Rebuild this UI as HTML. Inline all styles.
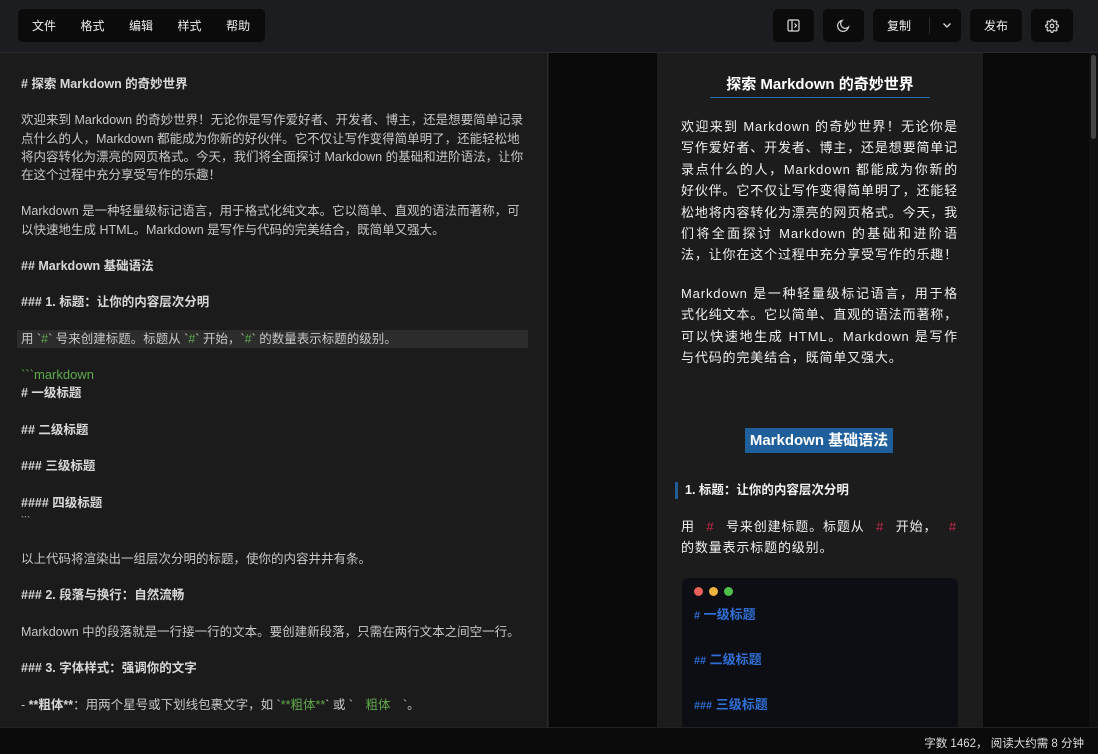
<!DOCTYPE html>
<html><head><meta charset="utf-8"><style>
*{box-sizing:border-box;margin:0;padding:0}
body{width:1098px;height:754px;overflow:hidden;background:#1b1b1c;font-family:"Liberation Sans","Noto Sans CJK SC",sans-serif;color:#ddd;position:relative}
.hdr{position:absolute;left:0;top:0;width:1098px;height:53px;background:#1c1d20;border-bottom:1px solid #2a2a2a}
.menu{position:absolute;left:18px;top:9px;width:247px;height:33px;background:#0b0b0c;border-radius:5px;display:flex;align-items:center;font-size:12px;color:#eee;padding-left:14px;gap:24.5px}
.btn{position:absolute;top:9px;height:33px;background:#0b0b0c;border-radius:5px;display:flex;align-items:center;justify-content:center;font-size:12px;color:#eee}
.ed{position:absolute;left:0;top:53px;width:548px;height:674px;background:#1b1b1b;border-right:1px solid #2b2b2b;padding:22px 21px;font-size:12.5px;line-height:18.2px;color:#c8c8c8}
.ed b{color:#d8d8d8}
.ed .g{color:#5fa84c}
.hl{background:#2c2c2c;margin:0 -4px;padding:0 4px;width:511px}
.pv{position:absolute;left:549px;top:53px;width:540px;height:674px;background:#090909}
.panel{position:absolute;left:657px;top:53px;width:326px;height:674px;background:#1c1c1d;overflow:hidden}
.sb{position:absolute;left:1089px;top:53px;width:9px;height:674px;background:#111}
.sb div{position:absolute;left:2px;top:2px;width:5px;height:84px;background:#444;border-radius:3px}
.p{position:absolute;left:24px;width:277px;font-size:13px;line-height:21.4px;letter-spacing:0.85px;color:#f0f0f0;text-align:justify}
.r{color:#c8284a}
.ft{position:absolute;left:0;top:727px;width:1098px;height:27px;background:#0b0b0b;border-top:1px solid #222;font-size:11.5px;color:#ddd;text-align:right;padding:7px 14px 0 0}
</style></head><body>
<div class="hdr">
<div class="menu"><span>文件</span><span>格式</span><span>编辑</span><span>样式</span><span>帮助</span></div>
<div class="btn" style="left:773px;width:41px"><svg width="13" height="13" viewBox="0 0 13 13" fill="none" stroke="#ddd" stroke-width="1.2"><rect x="1" y="1" width="11" height="11" rx="1.5"/><line x1="5" y1="1" x2="5" y2="12"/><path d="M7.5 4.5l2 2-2 2"/></svg></div>
<div class="btn" style="left:823px;width:41px"><svg width="13" height="13" viewBox="0 0 13 13" fill="none" stroke="#ddd" stroke-width="1.2"><path d="M11.5 8A5.5 5.5 0 1 1 5 1.5 4.2 4.2 0 0 0 11.5 8z"/></svg></div>
<div class="btn" style="left:873px;width:88px;justify-content:flex-start"><span style="margin-left:14px">复制</span><span style="position:absolute;left:56px;top:8px;width:1px;height:17px;background:#2a2a2a"></span><svg style="position:absolute;left:69px;top:13px" width="10" height="7" viewBox="0 0 10 7" fill="none" stroke="#ddd" stroke-width="1.3"><path d="M1.5 1.5l3.5 3.5 3.5-3.5"/></svg></div>
<div class="btn" style="left:970px;width:52px">发布</div>
<div class="btn" style="left:1031px;width:42px"><svg width="14" height="14" viewBox="0 0 24 24" fill="none" stroke="#ddd" stroke-width="2"><circle cx="12" cy="12" r="3"/><path d="M19.4 15a1.7 1.7 0 0 0 .3 1.8l.1.1a2 2 0 1 1-2.8 2.8l-.1-.1a1.7 1.7 0 0 0-1.8-.3 1.7 1.7 0 0 0-1 1.5V21a2 2 0 1 1-4 0v-.1a1.7 1.7 0 0 0-1.1-1.5 1.7 1.7 0 0 0-1.8.3l-.1.1a2 2 0 1 1-2.8-2.8l.1-.1a1.7 1.7 0 0 0 .3-1.8 1.7 1.7 0 0 0-1.5-1H3a2 2 0 1 1 0-4h.1a1.7 1.7 0 0 0 1.5-1.1 1.7 1.7 0 0 0-.3-1.8l-.1-.1a2 2 0 1 1 2.8-2.8l.1.1a1.7 1.7 0 0 0 1.8.3H9a1.7 1.7 0 0 0 1-1.5V3a2 2 0 1 1 4 0v.1a1.7 1.7 0 0 0 1 1.5 1.7 1.7 0 0 0 1.8-.3l.1-.1a2 2 0 1 1 2.8 2.8l-.1.1a1.7 1.7 0 0 0-.3 1.8V9a1.7 1.7 0 0 0 1.5 1H21a2 2 0 1 1 0 4h-.1a1.7 1.7 0 0 0-1.5 1z"/></svg></div>
</div>
<div class="ed">
<div><b># 探索 Markdown 的奇妙世界</b></div><br>
<div>欢迎来到 Markdown 的奇妙世界！无论你是写作爱好者、开发者、博主，还是想要简单记录点什么的人，Markdown 都能成为你新的好伙伴。它不仅让写作变得简单明了，还能轻松地将内容转化为漂亮的网页格式。今天，我们将全面探讨 Markdown 的基础和进阶语法，让你在这个过程中充分享受写作的乐趣！</div><br>
<div>Markdown 是一种轻量级标记语言，用于格式化纯文本。它以简单、直观的语法而著称，可以快速地生成 HTML。Markdown 是写作与代码的完美结合，既简单又强大。</div><br>
<div><b>## Markdown 基础语法</b></div><br>
<div><b>### 1. 标题：让你的内容层次分明</b></div><br>
<div class="hl">用 &#96;<span class="g">#</span>&#96; 号来创建标题。标题从 &#96;<span class="g">#</span>&#96; 开始，&#96;<span class="g">#</span>&#96; 的数量表示标题的级别。</div><br>
<div class="g" style="font-size:13px">&#96;&#96;&#96;markdown</div>
<div><b># 一级标题</b></div><br>
<div><b>## 二级标题</b></div><br>
<div><b>### 三级标题</b></div><br>
<div><b>#### 四级标题</b></div>
<div style="font-size:9px;line-height:16px">&#96;&#96;&#96;</div><br><div style="height:4px"></div>
<div>以上代码将渲染出一组层次分明的标题，使你的内容井井有条。</div><br>
<div><b>### 2. 段落与换行：自然流畅</b></div><br>
<div>Markdown 中的段落就是一行接一行的文本。要创建新段落，只需在两行文本之间空一行。</div><br>
<div><b>### 3. 字体样式：强调你的文字</b></div><br>
<div>- <b>**粗体**</b>：用两个星号或下划线包裹文字，如 &#96;<span class="g">**粗体**</span>&#96; 或 &#96;　<span class="g">粗体</span>　&#96;。</div>
</div>
<div class="pv"></div>
<div class="panel">
<div style="position:absolute;left:53px;top:20px;width:220px;text-align:center;font-size:15px;font-weight:bold;color:#fff;padding-bottom:3px;border-bottom:1.5px solid #2a6bb0">探索 Markdown 的奇妙世界</div>
<div class="p" style="top:63px">欢迎来到 Markdown 的奇妙世界！无论你是写作爱好者、开发者、博主，还是想要简单记录点什么的人，Markdown 都能成为你新的好伙伴。它不仅让写作变得简单明了，还能轻松地将内容转化为漂亮的网页格式。今天，我们将全面探讨 Markdown 的基础和进阶语法，让你在这个过程中充分享受写作的乐趣！</div>
<div class="p" style="top:230px">Markdown 是一种轻量级标记语言，用于格式化纯文本。它以简单、直观的语法而著称，可以快速地生成 HTML。Markdown 是写作与代码的完美结合，既简单又强大。</div>
<div style="position:absolute;left:88px;top:375px;width:148px;height:25px;background:#1e5f9c;color:#fff;font-size:15px;font-weight:bold;text-align:center;line-height:25px">Markdown 基础语法</div>
<div style="position:absolute;left:18px;top:429px;height:17px;border-left:3px solid #235d96;padding-left:7px;font-size:12.5px;font-weight:bold;color:#f0f0f0;line-height:17px">1. 标题：让你的内容层次分明</div>
<div class="p" style="top:463px;width:276px"><div style="display:flex;justify-content:space-between;white-space:nowrap"><span>用</span><span class="r">#</span><span>号来创建标题。标题从</span><span class="r">#</span><span>开始，</span><span class="r">#</span></div><div>的数量表示标题的级别。</div></div>
<div style="position:absolute;left:25px;top:525px;width:276px;height:160px;background:#0c0e13;border-radius:6px">
<span style="position:absolute;left:12px;top:9px;width:9px;height:9px;border-radius:50%;background:#e8615a"></span>
<span style="position:absolute;left:27px;top:9px;width:9px;height:9px;border-radius:50%;background:#f0b43c"></span>
<span style="position:absolute;left:42px;top:9px;width:9px;height:9px;border-radius:50%;background:#4fc04a"></span>
<div style="position:absolute;left:12px;top:15px;font-size:13px;font-weight:bold;color:#2f6fd6;line-height:43px"><div><small>#</small> 一级标题</div><div><small>##</small> 二级标题</div><div><small>###</small> 三级标题</div></div>
</div>
</div>
<div class="sb"><div></div></div>
<div class="ft">字数 1462， 阅读大约需 8 分钟</div>
</body></html>
